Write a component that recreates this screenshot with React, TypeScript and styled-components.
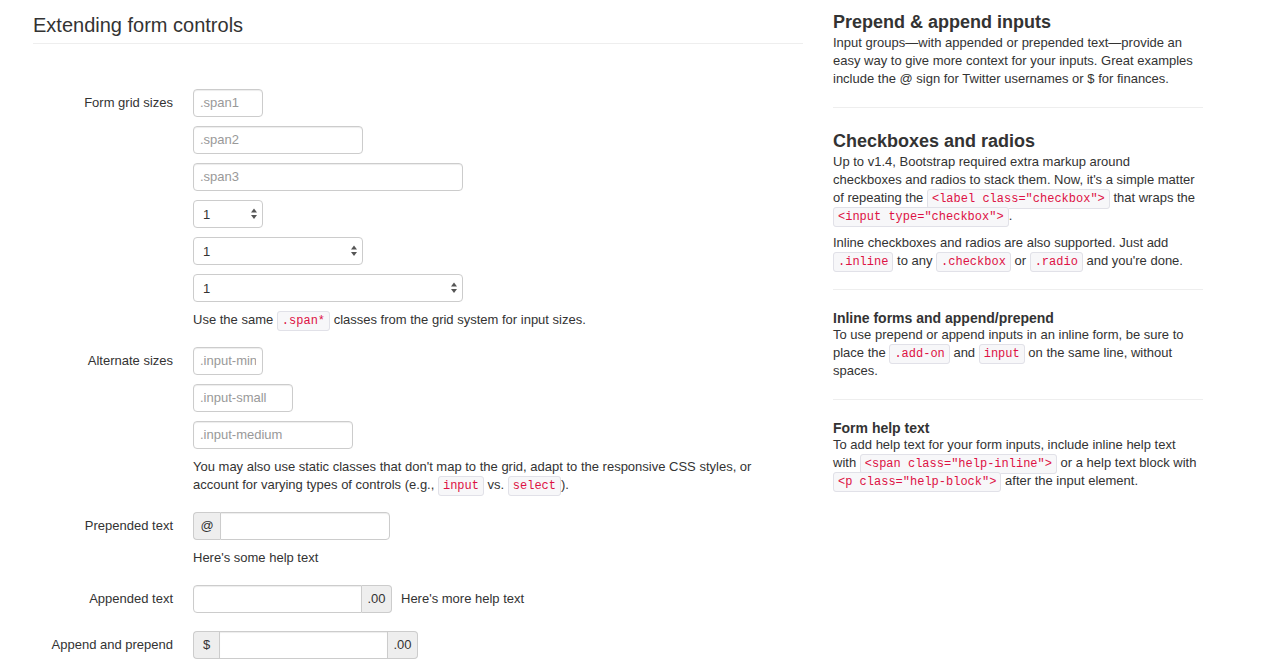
import { FC, ReactNode } from "react";
import styled, { createGlobalStyle } from "styled-components";

const GlobalStyle = createGlobalStyle`
  body {
    margin: 0;
    background: #fff;
    color: #333;
    font-family: "Liberation Sans", Arial, sans-serif;
    font-size: 13px;
    line-height: 18px;
  }
`;

const Page = styled.div`
  display: flex;
  gap: 30px;
  padding-left: 33px;
  width: 1274px;
  height: 666px;
  box-sizing: border-box;
  overflow: hidden;
`;

const LeftColumn = styled.div`
  width: 770px;
  flex-shrink: 0;
`;

const RightColumn = styled.div`
  width: 370px;
  flex-shrink: 0;
  white-space: nowrap;
`;

const PageHeader = styled.h2`
  margin: 0 0 45px;
  padding: 13px 0 6px;
  font-size: 20px;
  line-height: 24px;
  font-weight: normal;
  color: #333;
  border-bottom: 1px solid #eee;
`;

const ControlGroup = styled.div`
  display: flex;
  margin-bottom: 18px;
`;

const ControlLabel = styled.label`
  width: 140px;
  flex-shrink: 0;
  padding-top: 5px;
  text-align: right;
`;

const Controls = styled.div`
  margin-left: 20px;
  display: flex;
  flex-direction: column;
  align-items: flex-start;
`;

const Input = styled.input<{ $width: number }>`
  width: ${(p) => p.$width}px;
  height: 28px;
  box-sizing: border-box;
  padding: 3px 6px 4px;
  margin: 0 0 9px;
  border: 1px solid #ccc;
  border-radius: 4px;
  background: #fff;
  box-shadow: inset 0 1px 1px rgba(0, 0, 0, 0.075);
  font-family: "Liberation Sans", Arial, sans-serif;
  font-size: 13px;
  color: #555;
  outline: none;

  &::placeholder {
    color: #999;
  }
`;

const SelectWrap = styled.div<{ $width: number }>`
  position: relative;
  width: ${(p) => p.$width}px;
  margin-bottom: 9px;
`;

const Select = styled.select`
  appearance: none;
  width: 100%;
  height: 28px;
  box-sizing: border-box;
  padding: 0 20px 0 9px;
  border: 1px solid #ccc;
  border-radius: 4px;
  background: #fff;
  font-family: "Liberation Sans", Arial, sans-serif;
  font-size: 13px;
  color: #333;
  outline: none;
`;

const SelectArrows = styled.svg`
  position: absolute;
  right: 5px;
  top: 8px;
  pointer-events: none;
`;

const HelpBlock = styled.p`
  margin: 0;
`;

const HelpInline = styled.span`
  margin-left: 9px;
  line-height: 28px;
`;

const InputRow = styled.div`
  display: flex;
  align-items: flex-start;
`;

const InputGroup = styled.div<{ $flush?: boolean }>`
  display: flex;
  margin-bottom: ${(p) => (p.$flush ? 0 : 9)}px;
`;

const AddOn = styled.span<{ $side: "left" | "right"; $width: number }>`
  width: ${(p) => p.$width}px;
  height: 28px;
  box-sizing: border-box;
  display: flex;
  align-items: center;
  justify-content: center;
  background: #eee;
  border: 1px solid #ccc;
  border-radius: ${(p) => (p.$side === "left" ? "4px 0 0 4px" : "0 4px 4px 0")};
  ${(p) => (p.$side === "left" ? "border-right: none;" : "border-left: none;")}
  color: #333;
`;

const GroupInput = styled.input<{ $left?: boolean; $right?: boolean; $width: number }>`
  width: ${(p) => p.$width}px;
  height: 28px;
  box-sizing: border-box;
  padding: 4px 6px;
  border: 1px solid #ccc;
  border-radius: ${(p) =>
    `${p.$left ? 0 : 4}px ${p.$right ? 0 : 4}px ${p.$right ? 0 : 4}px ${p.$left ? 0 : 4}px`};
  background: #fff;
  box-shadow: inset 0 1px 1px rgba(0, 0, 0, 0.075);
  outline: none;
`;

const Code = styled.code`
  font-family: "Liberation Mono", "DejaVu Sans Mono", monospace;
  font-size: 12px;
  line-height: 12px;
  color: #dd1144;
  background: #f7f7f9;
  border: 1px solid #e1e1e8;
  border-radius: 3px;
  padding: 2px 4px;
`;

const SideTitle = styled.h3<{ $top: number }>`
  margin: ${(p) => p.$top}px 0 2px;
  font-size: 18px;
  line-height: 20px;
  font-weight: bold;
  color: #333;
`;

const SideSubtitle = styled.h4`
  margin: 20px 0 0;
  font-size: 14px;
  line-height: 16px;
  font-weight: bold;
  color: #333;
`;

const SideText = styled.p<{ $gap?: boolean }>`
  margin: ${(p) => (p.$gap ? "9px" : "0")} 0 0;
`;

const Divider = styled.hr`
  margin: 19px 0 0;
  border: 0;
  border-top: 1px solid #eee;
`;

const Arrows: FC = () => (
  <SelectArrows width="8" height="12" viewBox="0 0 8 12">
    <path d="M4 0.5 L7 4.5 L1 4.5 Z" fill="#555" />
    <path d="M4 11 L7 7 L1 7 Z" fill="#555" />
  </SelectArrows>
);

const SelectBox: FC<{ width: number }> = ({ width }) => (
  <SelectWrap $width={width}>
    <Select defaultValue="1">
      <option>1</option>
      <option>2</option>
      <option>3</option>
    </Select>
    <Arrows />
  </SelectWrap>
);

const Group: FC<{ label: string; children: ReactNode }> = ({ label, children }) => (
  <ControlGroup>
    <ControlLabel>{label}</ControlLabel>
    <Controls>{children}</Controls>
  </ControlGroup>
);

const App: FC = () => {
  return (
    <>
      <GlobalStyle />
      <Page>
        <LeftColumn>
          <PageHeader>Extending form controls</PageHeader>

          <Group label="Form grid sizes">
            <Input $width={70} placeholder=".span1" />
            <Input $width={170} placeholder=".span2" />
            <Input $width={270} placeholder=".span3" />
            <SelectBox width={70} />
            <SelectBox width={170} />
            <SelectBox width={270} />
            <HelpBlock>
              Use the same <Code>.span*</Code> classes from the grid system for input sizes.
            </HelpBlock>
          </Group>

          <Group label="Alternate sizes">
            <Input $width={70} placeholder=".input-mini" />
            <Input $width={100} placeholder=".input-small" />
            <Input $width={160} placeholder=".input-medium" />
            <HelpBlock>
              You may also use static classes that don't map to the grid, adapt to the responsive CSS styles, or
              <br />
              account for varying types of controls (e.g., <Code>input</Code> vs. <Code>select</Code>).
            </HelpBlock>
          </Group>

          <Group label="Prepended text">
            <InputGroup>
              <AddOn $side="left" $width={27}>@</AddOn>
              <GroupInput $left $width={170} />
            </InputGroup>
            <HelpBlock>Here's some help text</HelpBlock>
          </Group>

          <Group label="Appended text">
            <InputRow>
              <InputGroup $flush>
                <GroupInput $right $width={169} />
                <AddOn $side="right" $width={30}>.00</AddOn>
              </InputGroup>
              <HelpInline>Here's more help text</HelpInline>
            </InputRow>
          </Group>

          <Group label="Append and prepend">
            <InputGroup>
              <AddOn $side="left" $width={26}>$</AddOn>
              <GroupInput $left $right $width={169} />
              <AddOn $side="right" $width={30}>.00</AddOn>
            </InputGroup>
          </Group>
        </LeftColumn>

        <RightColumn>
          <SideTitle $top={12}>Prepend &amp; append inputs</SideTitle>
          <SideText>
            Input groups—with appended or prepended text—provide an
            <br />
            easy way to give more context for your inputs. Great examples
            <br />
            include the @ sign for Twitter usernames or $ for finances.
          </SideText>
          <Divider />

          <SideTitle $top={23}>Checkboxes and radios</SideTitle>
          <SideText>
            Up to v1.4, Bootstrap required extra markup around
            <br />
            checkboxes and radios to stack them. Now, it's a simple matter
            <br />
            of repeating the <Code>&lt;label class="checkbox"&gt;</Code> that wraps the
            <br />
            <Code>&lt;input type="checkbox"&gt;</Code>.
          </SideText>
          <SideText $gap>
            Inline checkboxes and radios are also supported. Just add
            <br />
            <Code>.inline</Code> to any <Code>.checkbox</Code> or <Code>.radio</Code> and you're done.
          </SideText>
          <Divider />

          <SideSubtitle>Inline forms and append/prepend</SideSubtitle>
          <SideText>
            To use prepend or append inputs in an inline form, be sure to
            <br />
            place the <Code>.add-on</Code> and <Code>input</Code> on the same line, without
            <br />
            spaces.
          </SideText>
          <Divider />

          <SideSubtitle>Form help text</SideSubtitle>
          <SideText>
            To add help text for your form inputs, include inline help text
            <br />
            with <Code>&lt;span class="help-inline"&gt;</Code> or a help text block with
            <br />
            <Code>&lt;p class="help-block"&gt;</Code> after the input element.
          </SideText>
        </RightColumn>
      </Page>
    </>
  );
};

export default App;
